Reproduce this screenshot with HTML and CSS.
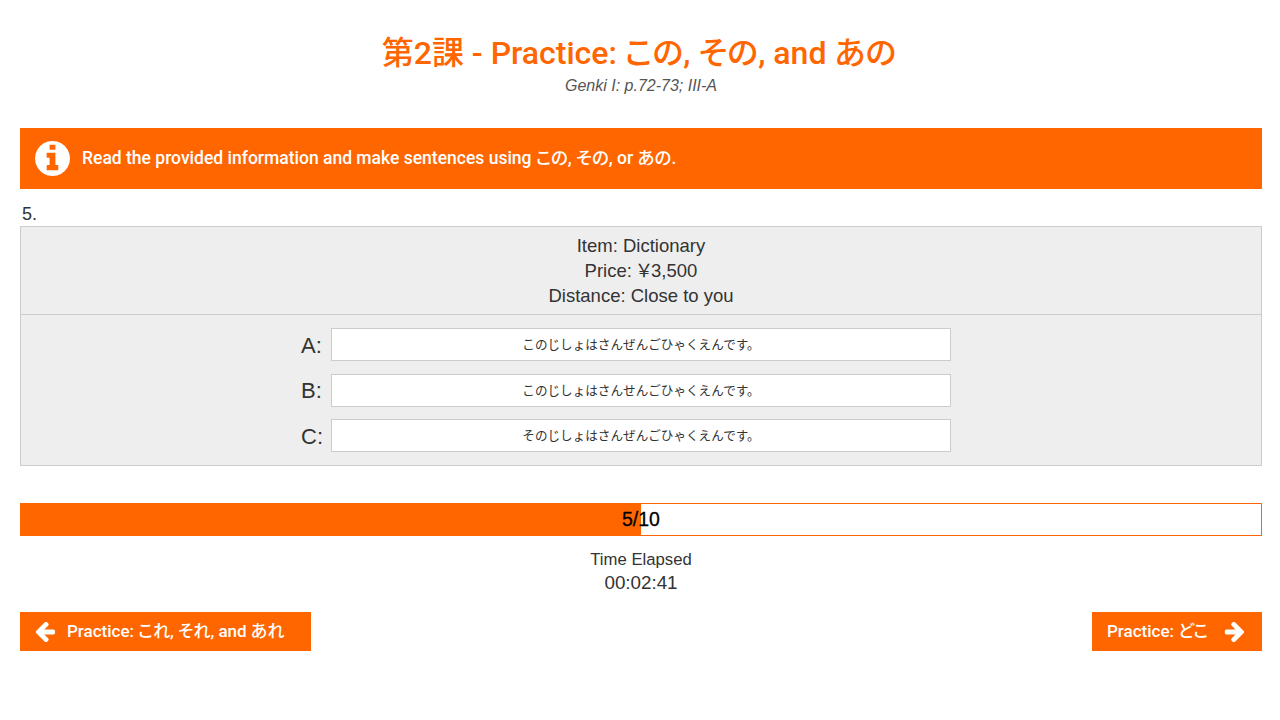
FILE: index.html
```html
<!DOCTYPE html>
<html lang="ja">
<head>
<meta charset="utf-8">
<title>第2課 - Practice: この, その, and あの</title>
<link rel="stylesheet" href="styles.css">
</head>
<body>
<main class="page">
  <header class="head">
    <h1 class="title">第2課 - Practice: この, その, and あの</h1>
    <p class="source">Genki I: p.72-73; III-A</p>
  </header>
  <div class="banner">
    <svg class="info-icon" viewBox="128 128 1536 1536" aria-hidden="true"><path fill-rule="evenodd" d="M1152 1376v-160q0-14-9-23t-23-9h-96v-512q0-14-9-23t-23-9h-320q-14 0-23 9t-9 23v160q0 14 9 23t23 9h96v320h-96q-14 0-23 9t-9 23v160q0 14 9 23t23 9h448q14 0 23-9t9-23zm-128-896v-160q0-14-9-23t-23-9h-192q-14 0-23 9t-9 23v160q0 14 9 23t23 9h192q14 0 23-9t9-23zm640 416q0 209-103 385.5t-279.5 279.5-385.5 103-385.5-103-279.5-279.5-103-385.5 103-385.5 279.5-279.5 385.5-103 385.5 103 279.5 279.5 103 385.5z"/></svg>
    <span class="banner-text">Read the provided information and make sentences using この, その, or あの.</span>
  </div>
  <div class="number">5.</div>
  <section class="question">
    <div class="info">
      <div>Item: Dictionary</div>
      <div>Price: ￥3,500</div>
      <div>Distance: Close to you</div>
    </div>
    <div class="answers">
      <div class="answer"><span class="label">A:</span><input class="field" type="text" value="このじしょはさんぜんごひゃくえんです。"></div>
      <div class="answer"><span class="label">B:</span><input class="field" type="text" value="このじしょはさんせんごひゃくえんです。"></div>
      <div class="answer"><span class="label">C:</span><input class="field" type="text" value="そのじしょはさんぜんごひゃくえんです。"></div>
    </div>
  </section>
  <div class="progress">
    <div class="progress-fill"></div>
    <span class="progress-text">5/10</span>
  </div>
  <div class="timer">
    <div class="timer-label">Time Elapsed</div>
    <div class="timer-value">00:02:41</div>
  </div>
  <nav class="nav">
    <a class="btn btn-prev" href="#">
      <svg class="arrow" viewBox="128 192 1536 1536" aria-hidden="true"><path d="M1664 896v128q0 53-32.5 90.5t-84.5 37.5h-704l293 294q38 36 38 90t-38 90l-75 76q-37 37-90 37-52 0-90-37l-651-652q-37-37-37-90 0-52 37-91l651-650q38-38 90-38 52 0 90 38l75 74q38 38 38 91t-38 91l-293 293h704q52 0 84.5 37.5t32.5 90.5z"/></svg>
      <span class="btn-text">Practice: これ, それ, and あれ</span>
    </a>
    <a class="btn btn-next" href="#">
      <span class="btn-text">Practice: どこ</span>
      <svg class="arrow" viewBox="64 192 1536 1536" aria-hidden="true"><path d="M1600 960q0 54-37 91l-651 651q-39 37-91 37-51 0-90-37l-75-75q-38-38-38-91t38-91l293-293h-704q-52 0-84.5-37.5t-32.5-90.5v-128q0-53 32.5-90.5t84.5-37.5h704l-293-294q-38-36-38-90t38-90l75-75q38-38 90-38 53 0 91 38l651 651q37 35 37 90z"/></svg>
    </a>
  </nav>
</main>
</body>
</html>
```

FILE: styles.css
```css
* { box-sizing: border-box; }
html, body { margin: 0; padding: 0; background: #fff; }
body {
  font-family: "Liberation Sans", "Noto Sans CJK JP", sans-serif;
  color: #333;
  font-size: 18px;
}
.page { padding: 0 18px 0 20px; height: 720px; overflow: hidden; }
.head { height: 128px; padding-top: 33px; text-align: center; }
.title {
  margin: 0;
  font-family: Roboto, "Noto Sans CJK JP", sans-serif;
  font-feature-settings: "palt";
  font-size: 32px;
  line-height: 40px;
  font-weight: 500;
  color: #f60;
  padding-right: 4px;
}
.source {
  margin: 2px 0 0;
  font-size: 16px;
  line-height: 22px;
  font-style: italic;
  color: #555;
}
.banner {
  height: 61px;
  background: #f60;
  color: #fff;
  display: flex;
  align-items: center;
  gap: 12px;
  padding-left: 15px;
  font-family: Roboto, "Noto Sans CJK JP", sans-serif;
  font-feature-settings: "palt";
  font-size: 17.5px;
  font-weight: 500;
}
.banner-text { padding-bottom: 4px; }
.info-icon { width: 35px; height: 35px; fill: #fff; flex: none; }
.number { height: 37px; padding: 14px 0 0 2px; font-size: 18px; line-height: 22px; }
.question {
  height: 240px;
  background: #eee;
  border: 1px solid #ccc;
}
.info {
  height: 88px;
  padding-top: 6px;
  border-bottom: 1px solid #ccc;
  text-align: center;
  font-size: 18.5px;
  line-height: 25px;
  font-feature-settings: "palt";
}
.answers { padding-top: 13px; display: flex; flex-direction: column; gap: 13.5px; }
.answer { display: grid; grid-template-columns: 1fr 620px 1fr; align-items: center; height: 32px; }
.label {
  justify-self: end;
  width: 30px;
  padding-top: 2px;
  font-size: 22px;
  color: #333;
}
.field {
  width: 620px;
  height: 33px;
  border: 1px solid #ccc;
  background: #fff;
  text-align: center;
  font-family: "Noto Sans CJK JP", sans-serif;
  font-size: 12.6px;
  color: #333;
  padding: 0 0 2px;
}
.progress {
  position: relative;
  margin-top: 37px;
  height: 33px;
  border: 1px solid #f60;
  background: #fff;
  display: flex;
  align-items: center;
  justify-content: center;
}
.progress-fill { position: absolute; left: 0; top: 0; bottom: 0; width: 50%; background: #f60; }
.progress-text { position: relative; font-size: 19.5px; color: #000; -webkit-text-stroke: 0.3px #000; }
.timer { margin-top: 12px; text-align: center; }
.timer-label { font-size: 16.7px; line-height: 23px; }
.timer-value { font-size: 18.8px; line-height: 24px; }
.nav { margin-top: 17px; display: flex; justify-content: space-between; }
.btn {
  height: 39px;
  background: #f60;
  color: #fff;
  display: flex;
  align-items: center;
  font-family: Roboto, "Noto Sans CJK JP", sans-serif;
  font-feature-settings: "palt";
  font-size: 17px;
  font-weight: 500;
  text-decoration: none;
}
.btn-text { padding-bottom: 4px; }
.btn-prev { width: 291px; padding-left: 15px; gap: 12px; }
.btn-next { width: 170px; padding-left: 15px; gap: 16px; }
.arrow { width: 20px; height: 20px; fill: #fff; flex: none; }
```
